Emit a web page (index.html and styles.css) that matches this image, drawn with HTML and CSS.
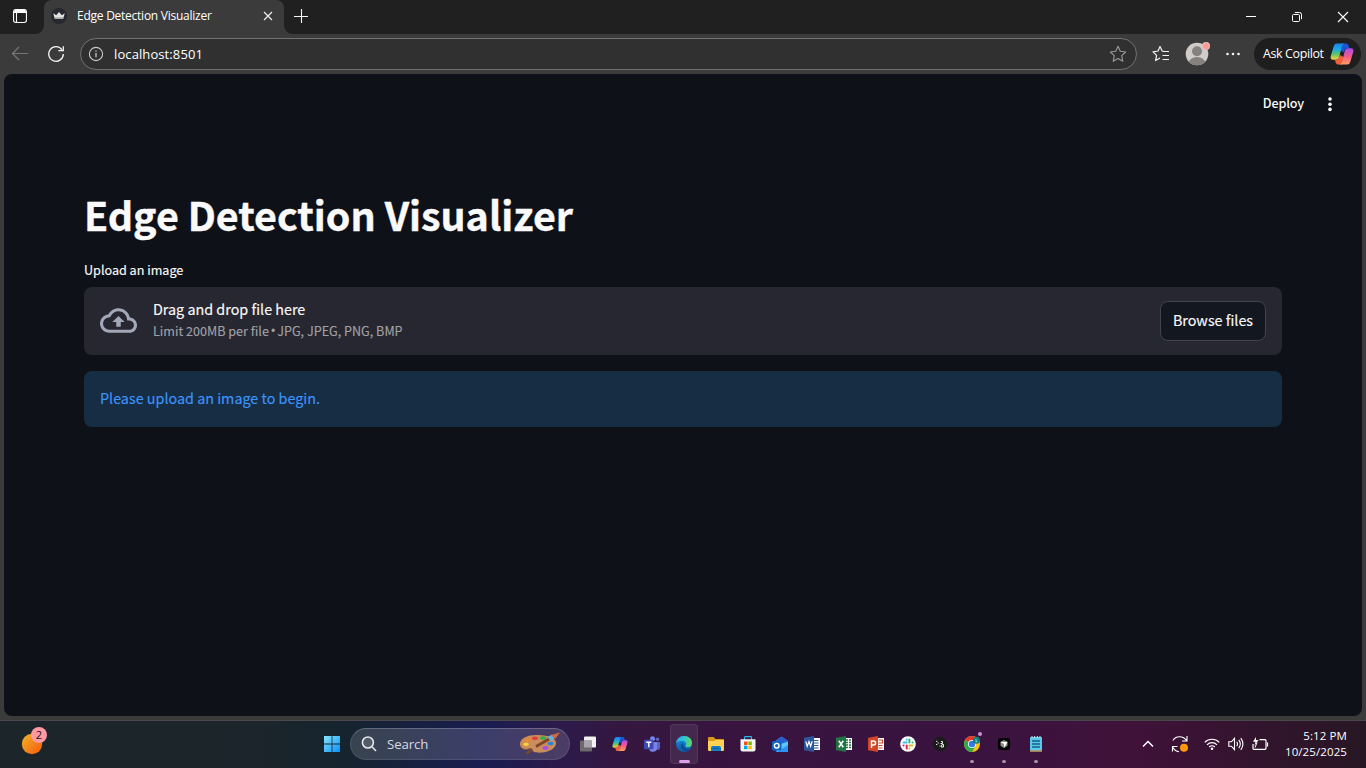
FILE: index.html
```html
<!DOCTYPE html>
<html lang="en">
<head>
<meta charset="utf-8">
<title>Edge Detection Visualizer</title>
<link rel="stylesheet" href="styles.css">
</head>
<body>
<svg width="0" height="0" class="defs" aria-hidden="true">
  <defs>
    <linearGradient id="cpA" x1="0" y1="0" x2="0" y2="1"><stop offset="0" stop-color="#1683e8"/><stop offset=".35" stop-color="#1ba7e8"/><stop offset=".65" stop-color="#5cc66a"/><stop offset="1" stop-color="#ffd13a"/></linearGradient>
    <linearGradient id="cpB" x1="0" y1="0" x2="0" y2="1"><stop offset="0" stop-color="#a44df0"/><stop offset=".5" stop-color="#f2588f"/><stop offset="1" stop-color="#ffa05a"/></linearGradient>
    <linearGradient id="win" x1="0" y1="0" x2="1" y2="1"><stop offset="0" stop-color="#86e4ff"/><stop offset="1" stop-color="#0a91f5"/></linearGradient>
    <linearGradient id="sun" x1="0" y1="0" x2="1" y2="1"><stop offset="0" stop-color="#efb62c"/><stop offset=".7" stop-color="#f47414"/><stop offset="1" stop-color="#f0640e"/></linearGradient>
    <linearGradient id="edgeA" x1="0" y1="0" x2="1" y2="0"><stop offset="0" stop-color="#2aa8e8"/><stop offset=".5" stop-color="#2fc4d4"/><stop offset="1" stop-color="#62d852"/></linearGradient>
    <linearGradient id="edgeB" x1="0" y1="0" x2="0" y2="1"><stop offset="0" stop-color="#1793e0"/><stop offset="1" stop-color="#1056a4"/></linearGradient>
    <symbol id="copilot" viewBox="0 0 24 24">
      <path fill="#1b55d0" d="M11 1.500h5c1.600 0 2.300.8 2.700 2.200l.8 2.800H17c-1.500 0-2.300.8-2.700 2L13.700 10.500 10 8z"/>
      <path fill="url(#cpA)" d="M6.500 1.500h8c-1.600.5-2.300 1.800-2.700 3.200L9.200 15C8.700 16.800 7.500 17.800 5.800 17.800H3c-2 0-2.800-1.600-2.200-3.800L3.500 4.800C4.100 2.800 5 1.500 6.500 1.500z"/>
      <path fill="#f0603c" d="M4.800 17.800c2.400 0 3.800-1 4.400-3l.8-1.800 3.500 2-1.500 7.500H8.500c-1.800 0-2.400-.8-2.900-2.300z"/>
      <path fill="url(#cpB)" d="M17.500 22.500h-8c1.600-.5 2.300-1.800 2.700-3.200l2.600-10.500C15.300 7 16.500 6.200 18.200 6.200H21c2 0 2.800 1.600 2.200 3.800L20.500 19.200c-.6 2-1.500 3.300-3 3.300z"/>
    </symbol>
  </defs>
</svg>

<div class="browser">
  <header class="tabstrip">
    <div class="tab-actions">
      <svg width="16" height="16" viewBox="0 0 16 16" fill="none" stroke="#fff" stroke-width="1.100"><rect x="1.550" y="1.550" width="12.900" height="12.900" rx="2.400"/><path d="M1.700 4.500h12.600M4.500 5v9" /><path d="M2.300 3h11.400" stroke-width="2"/></svg>
    </div>
    <div class="tab">
      <svg width="16" height="16" viewBox="0 0 16 16"><circle cx="8" cy="8" r="8" fill="#262730"/><path fill="#e4e4e6" d="M2.200 5.300l3 1.900L8 4l2.800 3.200 3-1.900-1.700 5.700H3.900z"/><path fill="#aaa" d="M3.600 9.300h8.800l-.4 1.800H4z"/></svg>
      <span class="tab-title">Edge Detection Visualizer</span>
      <svg class="tab-close" width="10" height="10" viewBox="0 0 10 10" stroke="#eee" stroke-width="1.200"><path d="M1 1l8 8M9 1l-8 8"/></svg>
    </div>
    <svg class="new-tab" width="16" height="16" viewBox="0 0 16 16" stroke="#f4f4f4" stroke-width="1.100"><path d="M1 8.500h14M8.500 1v14"/></svg>
    <div class="window-controls">
      <span><svg width="12" height="12" viewBox="0 0 12 12" stroke="#fff"><path d="M1 5.500h10"/></svg></span>
      <span><svg width="12" height="12" viewBox="0 0 12 12" fill="none" stroke="#fff"><rect x="1.500" y="3.500" width="7" height="7" rx="1"/><path d="M3.800 1.500h4.700a2 2 0 0 1 2 2v4.700"/></svg></span>
      <span><svg width="12" height="12" viewBox="0 0 12 12" stroke="#fff" stroke-width="1.100"><path d="M1 1l10 10M11 1l-10 10"/></svg></span>
    </div>
  </header>

  <nav class="toolbar">
    <span class="nav-btn"><svg width="18" height="16" viewBox="0 0 18 16" fill="none" stroke="#777" stroke-width="1.200"><path d="M17 7.500H1.500M8 1L1.500 7.500 8 14"/></svg></span>
    <span class="nav-btn"><svg width="18" height="18" viewBox="0 0 18 18" fill="none" stroke="#f2f2f2" stroke-width="1.300"><path d="M15 4.800A7.300 7.300 0 1 0 16.300 9M16.300 1.200v4.500h-5"/></svg></span>
    <div class="address">
      <svg width="16" height="16" viewBox="0 0 16 16" fill="none" stroke="#c8c8c8" stroke-width="1.100"><circle cx="8" cy="8" r="6.600"/><path d="M8 7v4.200" stroke-width="1.300"/><path d="M8 4.500v1.300" stroke-width="1.300"/></svg>
      <span class="url">localhost:8501</span>
      <svg class="star" width="18" height="18" viewBox="0 0 18 18" fill="none" stroke="#999" stroke-width="1.100" stroke-linejoin="round"><path d="M9 1.300l2.300 5 5.400.7-4 3.700 1.100 5.600L9 13.500l-4.800 2.800 1.100-5.600-4-3.700 5.400-.7z"/></svg>
    </div>
    <svg class="favorites" width="18" height="18" viewBox="0 0 18 18" fill="none" stroke="#f2f2f2" stroke-width="1.200" stroke-linejoin="round"><path d="M11.500 6.300L10.200 6 8 1.500 6 6l-5 .8 3.600 3.600-1 5.200 4.400-2.500M11 6.500h6M10.500 10.500h6.500M10.500 14.500h6.500"/></svg>
    <svg class="avatar" width="26" height="26" viewBox="0 0 26 26"><circle cx="12" cy="13" r="11.300" fill="#cfccc9"/><clipPath id="av"><circle cx="12" cy="13" r="11.300"/></clipPath><circle cx="12" cy="10.300" r="5" fill="#85817e"/><ellipse cx="12" cy="22.500" rx="8.500" ry="6.500" fill="#85817e" clip-path="url(#av)"/><circle cx="21" cy="5" r="4" fill="#e3c4c0"/><circle cx="21" cy="5" r="3.100" fill="#ff9a92"/></svg>
    <svg class="more" width="16" height="4" viewBox="0 0 16 4" fill="#f2f2f2"><circle cx="2.500" cy="2" r="1.300"/><circle cx="8" cy="2" r="1.300"/><circle cx="13.500" cy="2" r="1.300"/></svg>
    <button class="ask"><span>Ask Copilot</span><svg width="24" height="24"><use href="#copilot"/></svg></button>
  </nav>

  <main class="app">
    <div class="app-header">
      <span class="deploy">Deploy</span>
      <svg width="6" height="16" viewBox="0 0 6 16" fill="#fafafa"><circle cx="3" cy="3" r="1.800"/><circle cx="3" cy="8.200" r="1.800"/><circle cx="3" cy="13.400" r="1.800"/></svg>
    </div>
    <section class="content">
      <h1>Edge Detection Visualizer</h1>
      <label class="upload-label">Upload an image</label>
      <div class="dropzone">
        <svg class="cloud" width="37" height="37" viewBox="0 0 24 24" fill="#a3a8b8"><path d="M19.350 10.040C18.670 6.590 15.640 4 12 4 9.110 4 6.600 5.640 5.350 8.040 2.340 8.360 0 10.910 0 14c0 3.310 2.690 6 6 6h13c2.760 0 5-2.240 5-5 0-2.640-2.050-4.780-4.650-4.960zM19 18H6c-2.210 0-4-1.790-4-4 0-2.050 1.530-3.760 3.560-3.970l1.070-.11.5-.95C8.080 7.140 9.940 6 12 6c2.620 0 4.880 1.860 5.390 4.430l.3 1.500 1.530.11c1.560.1 2.780 1.410 2.780 2.960 0 1.650-1.350 3-3 3zM8 13h2.550v3h2.900v-3H16l-4-4z"/></svg>
        <div class="drop-text">
          <span class="drop-main">Drag and drop file here</span>
          <span class="drop-limit">Limit 200MB per file <span class="bullet">•</span> JPG, JPEG, PNG, BMP</span>
        </div>
        <button class="browse"><span>Browse files</span></button>
      </div>
      <div class="info"><span>Please upload an image to begin.</span></div>
    </section>
  </main>
</div>

<footer class="taskbar">
  <div class="weather">
    <svg width="30" height="32" viewBox="0 0 30 32"><circle cx="12" cy="20" r="10.200" fill="url(#sun)"/><circle cx="19" cy="11" r="8" fill="#ff99a4"/></svg>
    <span class="badge">2</span>
  </div>
  <div class="dock">
    <span class="item"><svg width="16" height="16" viewBox="0 0 16 16" fill="url(#win)"><path d="M0 0h7.600v7.600H0zM8.400 0H16v7.600H8.400zM0 8.400h7.600V16H0zM8.400 8.400H16V16H8.400z"/></svg></span>
    <div class="search">
      <svg width="16" height="16" viewBox="0 0 16 16" fill="none" stroke="#e4e6ea" stroke-width="1.600"><circle cx="6.900" cy="6.500" r="5.500" fill="#ffffff22"/><path d="M11 10.700L15 15"/></svg>
      <span>Search</span>
      <svg class="palette" width="42" height="24" viewBox="0 0 42 24"><path fill="#c98e5c" d="M19 3C9 2.500 1 6 1 12c0 4 4 6 7.500 5 3-.8 5-.5 5 1 0 2 4 3 9 2.500C31 20 37 16 37 11c0-5-7-7.700-18-8z"/><path d="M1.300 13.500c.7 3 4.500 4.500 7.500 3.700 3-.8 4.500-.5 4.700 1" fill="none" stroke="#9a623a"/><ellipse cx="16" cy="6.300" rx="3" ry="1.700" fill="#e23b3b"/><ellipse cx="24" cy="6" rx="3" ry="1.800" fill="#35ad48"/><ellipse cx="8.500" cy="8" rx="2.800" ry="1.700" fill="#f08a24"/><ellipse cx="7" cy="12.300" rx="2.800" ry="1.700" fill="#f8d03c"/><ellipse cx="31.500" cy="11.500" rx="3" ry="1.800" fill="#2b83d8"/><ellipse cx="26.500" cy="16" rx="3" ry="1.900" fill="#a750e8"/><path d="M7.500 21.500L13 18M17 14.500L31 6.500" stroke="#7d4529" stroke-width="2.600"/><path d="M30 7l4-2.500" stroke="#63b2e6" stroke-width="4.500"/><path fill="#d46a3c" d="M32 3l9-2.500-5 6.500z"/></svg>
    </div>
    <span class="item first"><svg width="16" height="16" viewBox="0 0 16 16"><rect x="4" y=".5" width="12" height="11" rx="1" fill="#f2f2f2"/><rect x="0" y="4.500" width="12" height="11" rx="1" fill="#6d696d"/><path d="M4 4.500h8v7H4z" fill="#aaa5aa"/></svg></span>
    <span class="item"><svg width="16" height="16"><use href="#copilot"/></svg></span>
    <span class="item"><svg width="16" height="16" viewBox="0 0 16 16"><circle cx="8.500" cy="2.700" r="2.500" fill="#7b83eb"/><circle cx="13.500" cy="3.300" r="1.800" fill="#5a62c3"/><path fill="#5a62c3" d="M11 6h5v5.500c0 2-2 3-4 2z"/><path fill="#7b83eb" d="M5 6h8v6c0 5-8 5.300-8 0z"/><rect y="3.800" width="9.500" height="9.500" rx="1" fill="#3f4ab5"/><path d="M2.300 6.200h5M4.800 6.200v5" stroke="#fff" stroke-width="1.400"/></svg></span>
    <span class="item active"><svg width="16" height="16" viewBox="0 0 16 16"><circle cx="8" cy="8" r="8" fill="url(#edgeB)"/><path fill="url(#edgeA)" d="M.1 7C.7 3 4 0 8 0c4.800 0 8 3.200 8 6.700 0 3-2 4.500-4.400 4.500-1.700 0-2.600-.7-2.100-1.500 1.400-2-.1-4.600-3-4.600C3.700 5.100 1.300 5.500.1 7z"/><path fill="#0b4c98" d="M6.500 7C4.800 8.500 4.600 12 7.300 14c2.500 1.800 5.400 1 7.200-1.300C11.500 14 7 12.500 7.300 8.500z"/></svg></span>
    <span class="item"><svg width="16" height="16" viewBox="0 0 16 16"><path d="M0 2q0-1 1-1h4.500l2 2H15q1 0 1 1v3H0z" fill="#d99a18"/><path d="M0 5h6l1.500-1H16v10q0 1-1 1H1q-1 0-1-1z" fill="#ffd152"/><path d="M3 15v-3.500q0-1.500 1.500-1.500h7q1.500 0 1.500 1.500V15z" fill="#147fc8"/><path d="M5 12.300h6" stroke="#0a5794"/></svg></span>
    <span class="item"><svg width="16" height="16" viewBox="0 0 16 16"><path d="M4.500 4V1.500q0-.8.8-.8h5.400q.8 0 .8.800V4" fill="none" stroke="#2bb8ea" stroke-width="1.200"/><path d="M.5 3.200h15v10.300q0 2-2 2h-11q-2 0-2-2z" fill="#f5f5f5"/><path fill="#f25022" d="M4 5.500h3.500V9H4z"/><path fill="#7fba00" d="M8.300 5.500h3.500V9H8.300z"/><path fill="#00a4ef" d="M4 9.700h3.500v3.500H4z"/><path fill="#ffb900" d="M8.300 9.700h3.500v3.500H8.300z"/></svg></span>
    <span class="item"><svg width="16" height="16" viewBox="0 0 16 16"><path d="M2 6l6.500-5q1-.7 2 0L16 5v9.500q0 1.500-1.500 1.500H4z" fill="#2c7be0"/><path d="M5 4l3.500-3q1-.7 2 0L16 5l-6 5z" fill="#2a5fd0"/><path d="M6 9l10-3.500v9q0 1.500-1.500 1.500H5z" fill="#58c7f6"/><path d="M5 16L16 9v5.500q0 1.500-1.500 1.500z" fill="#2f92ee"/><rect y="5" width="9.500" height="9.500" rx="1.500" fill="#1065c7"/><circle cx="4.700" cy="9.700" r="2.300" fill="none" stroke="#fff" stroke-width="1.400"/></svg></span>
    <span class="item"><svg width="16" height="16" viewBox="0 0 16 16"><path d="M8 2h8v12H8z" fill="#fff"/><path d="M10 4.500h4.500M10 7h4.500M10 9.500h4.500M10 12h4.500" stroke="#2b579a"/><path d="M0 1.700L10 0v16L0 14.300z" fill="#2b579a"/><path d="M1.800 5.300l1.400 5L5 5.500l1.600 4.800L8.200 5.300" fill="none" stroke="#fff" stroke-width="1.200"/></svg></span>
    <span class="item"><svg width="16" height="16" viewBox="0 0 16 16"><path d="M8 2h8v12H8z" fill="#fff"/><path d="M10 4h2M13 4h2M10 6.500h2M13 6.500h2M10 9h2M13 9h2M10 11.500h2M13 11.500h2" stroke="#217346" stroke-width="1.400"/><path d="M0 1.700L10 0v16L0 14.300z" fill="#217346"/><path d="M2.800 4.800l4.500 6.500M7.300 4.800l-4.500 6.500" stroke="#fff" stroke-width="1.500"/></svg></span>
    <span class="item"><svg width="16" height="16" viewBox="0 0 16 16"><path d="M8 2h8v12H8z" fill="#fff"/><path d="M10.500 4h4v3h-4M10.500 9.500h4M10.500 12h4" stroke="#d24726" fill="none" stroke-width="1.200"/><path d="M0 1.700L10 0v16L0 14.300z" fill="#d24726"/><path d="M3.500 12V5h2a2 2 0 0 1 0 4h-2" stroke="#fff" fill="none" stroke-width="1.500"/></svg></span>
    <span class="item"><svg width="16" height="16" viewBox="0 0 16 16"><circle cx="8" cy="8" r="7.800" fill="#fff"/><g stroke-width="2" stroke-linecap="round"><path d="M6.700 3.500v.2M3.500 6.600h3.200" stroke="#36c5f0"/><path d="M9.400 3.500v3.100M12.500 6.600h.1" stroke="#2eb67d"/><path d="M9.400 12.500v.1M9.400 9.500h3.100" stroke="#ecb22e"/><path d="M6.700 9.500v3M3.500 9.500h.1" stroke="#e01e5a"/></g></svg></span>
    <span class="item"><svg width="16" height="16" viewBox="0 0 16 16"><circle cx="8" cy="8" r="7.200" fill="#1b1b1b"/><path d="M4 5.300h1.300M5.500 7h1.300M4 8.500h1.300M9 5.500h1.500v2H8.500M10 8.500h1.500v2.500H9zM7.500 10h1" stroke="#eee" fill="none"/></svg></span>
    <span class="item run chrome"><svg width="16" height="16" viewBox="0 0 16 16"><circle cx="8" cy="8" r="8" fill="#fbc116"/><path d="M8 8L1.100 4A8 8 0 0 1 14.900 4z" fill="#e33b2e"/><path d="M8 8L1.100 4A8 8 0 0 0 8 16l3.500-6z" fill="#2da94f"/><circle cx="8" cy="8" r="4" fill="#fff"/><circle cx="8" cy="8" r="3.200" fill="#3478e5"/><circle cx="12.500" cy="4.300" r="3.500" fill="#0b8178"/><path d="M12 2.800v3h1.500" stroke="#bde" fill="none" stroke-width=".8"/></svg></span>
    <span class="item run"><svg width="12" height="12" viewBox="0 0 12 12"><rect width="12" height="12" rx="2.500" fill="#050505"/><path d="M2.500 3.800L6 2l3.500 1.800v4L6 10 2.500 7.800z" fill="#8d8d8d"/><path d="M2.500 4h7L6 9.800V6z" fill="#fff"/></svg></span>
    <span class="item run"><svg width="14" height="16" viewBox="0 0 14 16"><rect x="1" y="1" width="12" height="14.500" rx="1" fill="#5bc9ea"/><path d="M1 15h12" stroke="#d78536" stroke-width="1.200"/><path d="M3 5h8M3 8h8M3 11h8" stroke="#145d86" stroke-width="1.300"/><path d="M3 0v2M5.700 0v2M8.400 0v2M11 0v2" stroke="#c3edf8"/></svg></span>
  </div>
  <div class="tray">
    <svg class="chev" width="12" height="8" viewBox="0 0 12 8" fill="none" stroke="#fff" stroke-width="1.500"><path d="M1 6.500l5-5 5 5"/></svg>
    <svg class="sync" width="18" height="18" viewBox="0 0 18 18" fill="none" stroke="#fff" stroke-width="1.100"><path d="M2 5.500C4.500.8 12 .2 15.500 5.500M16 1v5h-5M1.500 16.500v-5h5M2 12.500c1 2 3 4 6 4.200"/><circle cx="13" cy="12.800" r="4" fill="#ff980b" stroke="none"/></svg>
    <svg class="wifi" width="16" height="14" viewBox="0 0 16 14" fill="none" stroke="#fff" stroke-width="1.200"><path d="M.7 5.300a10.300 10.300 0 0 1 14.600 0M3 7.800a7 7 0 0 1 10 0M5.200 10a4 4 0 0 1 5.600 0"/><circle cx="8" cy="11.800" r="1.300" fill="#fff" stroke="none"/></svg>
    <svg class="vol" width="17" height="14" viewBox="0 0 17 14" fill="none" stroke="#fff" stroke-width="1.100"><path d="M.8 4.800h2.700l3-3.500v11.400l-3-3.500H.8zM8.700 4.800q1.600 2.200 0 4.400M10.800 2.900q3 4.100 0 8.200M12.800 1.200q4.300 5.800 0 11.600"/></svg>
    <svg class="bat" width="17" height="14" viewBox="0 0 17 14" fill="none" stroke="#fff" stroke-width="1.200"><path d="M7.500 2.700H13q1 0 1 1v7.600q0 1-1 1H2q-1 0-1-1V7"/><path d="M15.500 5.500v4"/><path d="M4 0L1 4.800h2.500L2.500 8.500 6.500 3H4z" fill="#fff" stroke="none"/><path d="M5 5.500L3 10.500" stroke-width="1"/></svg>
    <div class="clock"><span class="time">5:12 PM</span><span class="date">10/25/2025</span></div>
  </div>
</footer>
</body>
</html>
```

FILE: styles.css
```css
* { box-sizing: border-box; }

body {
  margin: 0;
  width: 1366px;
  height: 768px;
  overflow: hidden;
  display: flex;
  flex-direction: column;
  background: #3b3b3b;
  color: #fff;
  font-family: "Open Sans", "Noto Sans", sans-serif;
}

svg { display: block; flex: none; }
span { white-space: nowrap; }
.defs { position: absolute; }

.browser { height: 720px; display: flex; flex-direction: column; background: #3b3b3b; }

/* Tab strip */
.tabstrip { height: 34px; display: flex; align-items: center; background: #202020; }
.tab-actions { width: 44px; height: 34px; padding: 8px 0 0 12px; }
.tab {
  position: relative;
  width: 240px;
  height: 34px;
  padding: 0 11px 2px 7px;
  display: flex;
  align-items: center;
  background: #3b3b3b;
  border-radius: 8px 8px 0 0;
}
.tab::before, .tab::after {
  content: "";
  position: absolute;
  bottom: 0;
  width: 8px;
  height: 8px;
}
.tab::before { left: -8px; background: radial-gradient(circle at 0 0, #202020 7.5px, #3b3b3b 8px); }
.tab::after { right: -8px; background: radial-gradient(circle at 100% 0, #202020 7.5px, #3b3b3b 8px); }
.tab-title { margin-left: 10px; font-size: 12px; letter-spacing: -0.25px; line-height: 16px; }
.tab-close { margin-left: auto; }
.new-tab { margin: 0 0 3px 9px; }
.window-controls { margin-left: auto; display: flex; }
.window-controls span { width: 46px; display: grid; place-items: center; }

/* Toolbar */
.toolbar { height: 40px; display: flex; align-items: center; padding: 0 5px 0 2px; }
.nav-btn { width: 36px; display: grid; place-items: center; }
.address {
  width: 1057px;
  height: 32px;
  margin-left: 6px;
  padding: 0 9px 0 7px;
  display: flex;
  align-items: center;
  background: #303030;
  border: 1px solid #717171;
  border-radius: 16px;
}
.url { margin-left: 10px; font-size: 13px; letter-spacing: 0.1px; line-height: 18px; }
.star { margin-left: auto; }
.favorites { margin-left: 15px; }
.avatar { margin: 0 0 0 15px; }
.more { margin-left: 14px; }
.ask {
  width: 107px;
  height: 32px;
  margin-left: auto;
  padding: 0 7px 0 9px;
  display: flex;
  align-items: center;
  justify-content: space-between;
  border: 0;
  border-radius: 16px;
  background: #1e1e1e;
  color: #fff;
  font: 12.500px/18px "Open Sans", "Noto Sans", sans-serif;
  letter-spacing: -0.4px;
}

/* Application page */
.app {
  width: 1358px;
  height: 642px;
  margin: 0 4px;
  background: #0e1117;
  border-radius: 8px;
  color: #fafafa;
  font-family: "Noto Sans CJK SC", "Noto Sans", sans-serif;
}
.app-header {
  height: 60px;
  padding-right: 29px;
  display: flex;
  justify-content: flex-end;
  align-items: center;
  gap: 23px;
}
.deploy { margin-bottom: 2px; font-size: 12.600px; font-weight: 500; line-height: 20px; letter-spacing: -0.15px; }
.content { padding: 52px 80px 0; }
h1 { margin: 0; height: 56px; font-size: 39.400px; font-weight: 700; line-height: 56px; white-space: nowrap; -webkit-text-stroke: 0.4px #fafafa; }
.upload-label { display: block; height: 20px; margin-top: 18px; font-size: 12.600px; line-height: 20px; -webkit-text-stroke: 0.15px #fafafa; }
.dropzone {
  height: 68px;
  margin-top: 7px;
  padding: 0 16px;
  display: flex;
  align-items: center;
  background: #262730;
  border-radius: 8px;
}
.cloud { margin-bottom: 1px; }
.drop-text { margin: 0 0 4px 16px; display: flex; flex-direction: column; -webkit-text-stroke: 0.15px currentColor; }
.drop-main { font-size: 14.350px; line-height: 24px; height: 23px; margin-bottom: 1px; }
.drop-limit { font-size: 12.600px; line-height: 20px; height: 20px; color: #a0a0a5; }
.bullet { font-family: "Open Sans", sans-serif; font-size: 14px; line-height: 1; margin: 0 -1.300px; }
.browse {
  width: 106px;
  height: 40px;
  margin-left: auto;
  padding: 0 0 2px;
  border: 1px solid #41444c;
  border-radius: 8px;
  background: #131720;
  color: #fafafa;
  font: 14.350px/24px "Noto Sans CJK SC", "Noto Sans", sans-serif;
  -webkit-text-stroke: 0.15px #fafafa;
}
.info {
  height: 56px;
  margin-top: 16px;
  padding: 15px 16px;
  background: #172d43;
  border-radius: 8px;
  color: #3d94fb;
  font-size: 14.350px;
  line-height: 24px;
  -webkit-text-stroke: 0.15px #3d94fb;
}

/* Taskbar */
.taskbar {
  height: 48px;
  display: flex;
  box-shadow: inset 0 1px #4a474d;
  background: linear-gradient(90deg, #1b252a 0, #1c252b 250px, #15242e 340px, #191d50 480px, #2c1a4a 565px, #34173f 620px, #38143f 740px, #3a133f 1000px, #40123a 1130px, #33142e 1250px, #271724 1366px);
}
.weather { position: relative; width: 316px; padding: 4px 0 0 20px; }
.badge { position: absolute; left: 35px; top: 7px; width: 8px; text-align: center; font-size: 11px; line-height: 16px; color: #141414; }
.dock { width: 736px; display: flex; align-items: center; }
.item { position: relative; width: 32px; height: 40px; display: grid; place-items: center; }
.item.first { margin-left: 2px; }
.search {
  width: 220px;
  height: 32px;
  margin-left: 2px;
  padding: 0 8px 0 10px;
  display: flex;
  align-items: center;
  border: 1px solid #ffffff18;
  border-top-color: #ffffff35;
  border-radius: 16px;
  background: #ffffff26;
}
.search span { margin-left: 10px; font-size: 13.200px; letter-spacing: -0.1px; color: #d8dae2; line-height: 18px; }
.palette { margin-left: auto; }
.item.active { width: 28px; margin: 0 2px; border-radius: 4px; background: #ffffff14; border: 1px solid #ffffff14; }
.item.active::after { content: ""; position: absolute; bottom: 0; left: 8px; width: 11px; height: 3px; border-radius: 2px; background: #dd9fe5; }
.item.run::after { content: ""; position: absolute; bottom: 1px; left: 14px; width: 4px; height: 3px; border-radius: 2px; background: #a78fa8; }
.chrome::before { content: ""; position: absolute; top: 8px; left: 22px; width: 4px; height: 4px; border-radius: 2px; background: #d48bdc; }
.tray { flex: 1; display: flex; align-items: center; padding-right: 19px; }
.chev { margin-left: 90px; }
.sync { margin-left: 17px; }
.wifi { margin-left: 15px; }
.vol { margin-left: 8px; }
.bat { margin-left: 7px; }
.clock { margin-left: auto; display: flex; flex-direction: column; align-items: flex-end; font-size: 11.500px; line-height: 16px; letter-spacing: 0.1px; }
```
